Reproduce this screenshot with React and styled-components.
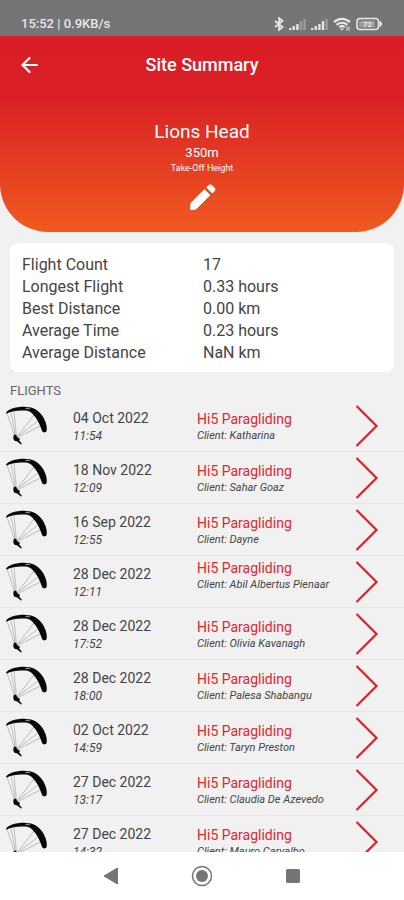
import React from "react";
import styled, { createGlobalStyle } from "styled-components";

const GlobalStyle = createGlobalStyle`
  *, *::before, *::after { box-sizing: border-box; }
  body {
    margin: 0;
    background: #f1f1f1;
    font-family: Roboto, "Liberation Sans", sans-serif;
    color: #444;
  }
  h1, h2, h3, p, dl, dd, ul { margin: 0; padding: 0; }
`;

const Screen = styled.div`
  display: flex;
  flex-direction: column;
  height: 100vh;
  overflow: hidden;
`;

const StatusBar = styled.div`
  flex: none;
  display: flex;
  align-items: flex-end;
  justify-content: space-between;
  height: 36px;
  padding: 0 21px 4px;
  background: #757575;
  color: #e6e6e6;
  font-size: 13px;
  font-weight: 500;
  line-height: 16px;
`;

const StatusIcons = styled.div`
  display: flex;
  align-items: center;
  gap: 5px;
  height: 16px;
`;

const Hero = styled.header`
  flex: none;
  height: 196px;
  border-radius: 0 0 48px 48px;
  background: linear-gradient(#d91e26 0%, #da1f26 30%, #f05a1f 100%);
  color: #fff;
`;

const TitleBar = styled.div`
  display: grid;
  grid-template-columns: 60px 1fr 60px;
  align-items: center;
  height: 58px;
`;

const IconButton = styled.button`
  display: flex;
  align-items: center;
  justify-content: center;
  padding: 0;
  border: 0;
  background: none;
  color: inherit;
  cursor: pointer;
`;

const PageTitle = styled.h1`
  font-size: 18px;
  line-height: 24px;
  font-weight: 500;
  text-align: center;
`;

const Site = styled.div`
  display: flex;
  flex-direction: column;
  align-items: center;
  padding-top: 26px;
`;

const SiteName = styled.h2`
  font-size: 19px;
  line-height: 24px;
  font-weight: 400;
`;

const SiteHeight = styled.p`
  font-size: 13px;
  line-height: 18px;
`;

const SiteCaption = styled.p`
  margin-bottom: 9px;
  font-size: 9px;
  line-height: 12px;
`;

const Content = styled.main`
  flex: 1;
  min-height: 0;
  overflow: hidden;
`;

const StatsCard = styled.dl`
  display: grid;
  grid-template-columns: 1fr 1fr;
  column-gap: 2px;
  margin: 11px 10px 10px;
  padding: 11px 12px 8px;
  border-radius: 8px;
  background: #fff;
  font-size: 16px;
  line-height: 22px;
`;

const SectionTitle = styled.h3`
  padding-left: 10px;
  color: #666;
  font-size: 13px;
  line-height: 18px;
  font-weight: 400;
`;

const FlightList = styled.ul`
  list-style: none;
`;

const FlightRow = styled.li`
  display: grid;
  grid-template-columns: 73px 124px 1fr 74px;
  align-items: center;
  height: 52px;
  border-bottom: 1px solid #e8e8e8;
`;

const FlightDate = styled.p`
  font-size: 14px;
  line-height: 20px;
`;

const FlightTime = styled.p`
  font-size: 12px;
  line-height: 16px;
  font-style: italic;
`;

const Operator = styled.p`
  color: #e0262e;
  font-size: 14px;
  line-height: 20px;
`;

const Client = styled.p`
  min-height: ${(p) => (p.$lines || 1) * 14}px;
  font-size: 11px;
  line-height: 14px;
  font-style: italic;
  white-space: nowrap;
`;

const GliderSvg = styled.svg`
  margin-left: 5px;
`;

const NavBar = styled.nav`
  flex: none;
  display: flex;
  align-items: center;
  justify-content: center;
  gap: 68px;
  height: 48px;
  background: #fff;
  color: #757575;
`;

const NavButton = styled(IconButton)`
  width: 23px;
  height: 24px;
`;

const stats = [
  ["Flight Count", "17"],
  ["Longest Flight", "0.33 hours"],
  ["Best Distance", "0.00 km"],
  ["Average Time", "0.23 hours"],
  ["Average Distance", "NaN km"],
];

const flights = [
  { date: "04 Oct 2022", time: "11:54", client: "Katharina" },
  { date: "18 Nov 2022", time: "12:09", client: "Sahar Goaz" },
  { date: "16 Sep 2022", time: "12:55", client: "Dayne" },
  { date: "28 Dec 2022", time: "12:11", client: "Abil Albertus Pienaar", lines: 2 },
  { date: "28 Dec 2022", time: "17:52", client: "Olivia Kavanagh" },
  { date: "28 Dec 2022", time: "18:00", client: "Palesa Shabangu" },
  { date: "02 Oct 2022", time: "14:59", client: "Taryn Preston" },
  { date: "27 Dec 2022", time: "13:17", client: "Claudia De Azevedo" },
  { date: "27 Dec 2022", time: "14:32", client: "Mauro Carvalho" },
];

function Bluetooth() {
  return (
    <svg width="10" height="14" viewBox="0 0 10 14" fill="none" stroke="currentColor" strokeWidth="1.8">
      <path d="M1 4l7.500 6L5 13V1l3.500 3L1 10" />
    </svg>
  );
}

function Signal({ bars }) {
  return (
    <svg width="17" height="12" viewBox="0 0 17 12" fill="currentColor">
      {[2, 4, 6, 9, 11].map((h, i) => (
        <rect key={h} x={i * 3.6} y={12 - h} width="2.4" height={h} rx="0.6" opacity={i < bars ? 1 : 0.35} />
      ))}
    </svg>
  );
}

function Wifi() {
  return (
    <svg width="18" height="14" viewBox="0 0 18 14" fill="none" stroke="currentColor" strokeWidth="2.200">
      <path d="M1 5.200C5.500.8 12.500.8 17 5.200M3.600 7.900c3-2.900 7.800-2.900 10.800 0M6.200 10.300c1.600-1.500 4-1.500 5.600 0" />
      <path d="M7 11.400h4L9 13.600z" fill="currentColor" stroke="none" />
      <path d="M14 9.500v4M16 9.500v4" strokeWidth="1" />
    </svg>
  );
}

function Battery() {
  return (
    <svg width="27" height="14" viewBox="0 0 27 14" fill="none" stroke="currentColor">
      <rect x="1" y="1.500" width="21.500" height="11" rx="3" strokeWidth="1.600" />
      <rect x="3" y="3.500" width="16" height="7" rx="1" fill="currentColor" stroke="none" opacity="0.35" />
      <path d="M24 4l2 3-2 3z" fill="currentColor" />
      <text x="11.500" y="10" fontSize="8" fontWeight="700" textAnchor="middle" fill="currentColor" stroke="none">72</text>
    </svg>
  );
}

function BackArrow() {
  return (
    <svg width="18" height="18" viewBox="0 0 18 18" fill="none" stroke="currentColor" strokeWidth="2.200" strokeLinecap="round">
      <path d="M16 9H2M8.500 2L1.500 9l7 7" />
    </svg>
  );
}

function Pencil() {
  return (
    <svg width="28" height="28" viewBox="0 0 28 28" fill="currentColor" stroke="currentColor" strokeLinejoin="round">
      <path d="M2.500 26.500l.5-6.500L16.500 6.500l5.500 5.500L8.500 25.500l-2 1z" />
      <path d="M18.800 4.400l1.700-1.700c1-1 2.600-1 3.600 0l2 2c1 1 1 2.500 0 3.500l-1.800 1.800z" />
    </svg>
  );
}

function Paraglider() {
  return (
    <GliderSvg width="43" height="40" viewBox="0 0 43 40">
      <path
        d="M2 7L10 31M6 6l5 26M9 5l2.500 26M33 15L12 31M35 20L12 32M29 9L12 31"
        fill="none" stroke="#a8a8a8" strokeWidth="0.700"
      />
      <path
        d="M1 7.800C.5 5 7 1.500 16 .8c5-.4 10 .1 14 2.200 5 2.700 8.500 7.500 10.500 13 1.200 3.500 1.700 7 1 9-.8 2-3.600 1.800-4.400 0C35.500 20.500 33.500 14.500 28.500 9 26 6.300 24 4.900 21 4.600 14 4.200 7 4.600 1 7.800z"
        fill="#080808"
      />
      <path d="M20.500 2.600l2.500-.5 2 1.200" fill="none" stroke="#aaa" />
      <path d="M9 28.500l2.200.5 1.300 2.500 2.500 1.200-.8 1.500 2.700 3.800-1 .5-3.600-3-3.300-1-.8-3z" fill="#080808" />
    </GliderSvg>
  );
}

function Chevron() {
  return (
    <svg width="24" height="42" viewBox="0 0 24 42" fill="none" stroke="#d9232b" strokeWidth="2.200">
      <path d="M1.500 1l20 20-20 20" />
    </svg>
  );
}

function Flight({ date, time, client, lines }) {
  return (
    <FlightRow>
      <Paraglider />
      <div>
        <FlightDate>{date}</FlightDate>
        <FlightTime>{time}</FlightTime>
      </div>
      <div>
        <Operator>Hi5 Paragliding</Operator>
        <Client $lines={lines}>Client: {client}</Client>
      </div>
      <IconButton aria-label={`Open flight of ${date}, ${time}`}>
        <Chevron />
      </IconButton>
    </FlightRow>
  );
}

export default function App() {
  return (
    <Screen>
      <GlobalStyle />
      <StatusBar>
        <span>15:52 | 0.9KB/s</span>
        <StatusIcons>
          <Bluetooth />
          <Signal bars={3} />
          <Signal bars={4} />
          <Wifi />
          <Battery />
        </StatusIcons>
      </StatusBar>
      <Hero>
        <TitleBar>
          <IconButton aria-label="Back"><BackArrow /></IconButton>
          <PageTitle>Site Summary</PageTitle>
        </TitleBar>
        <Site>
          <SiteName>Lions Head</SiteName>
          <SiteHeight>350m</SiteHeight>
          <SiteCaption>Take-Off Height</SiteCaption>
          <IconButton aria-label="Edit site"><Pencil /></IconButton>
        </Site>
      </Hero>
      <Content>
        <StatsCard>
          {stats.map(([label, value]) => (
            <React.Fragment key={label}>
              <dt>{label}</dt>
              <dd>{value}</dd>
            </React.Fragment>
          ))}
        </StatsCard>
        <SectionTitle>FLIGHTS</SectionTitle>
        <FlightList>
          {flights.map((f) => (
            <Flight key={f.date + f.time} {...f} />
          ))}
        </FlightList>
      </Content>
      <NavBar>
        <NavButton aria-label="Back">
          <svg width="16" height="18" viewBox="0 0 16 18" fill="currentColor">
            <path d="M14.500 1v16L1 9z" stroke="currentColor" strokeLinejoin="round" />
          </svg>
        </NavButton>
        <NavButton aria-label="Home">
          <svg width="22" height="22" viewBox="0 0 22 22">
            <circle cx="11" cy="11" r="9.500" fill="none" stroke="currentColor" strokeWidth="1.500" />
            <circle cx="11" cy="11" r="6" fill="currentColor" />
          </svg>
        </NavButton>
        <NavButton aria-label="Recent apps">
          <svg width="16" height="16" viewBox="0 0 16 16" fill="currentColor">
            <rect x="1" y="1" width="14" height="14" rx="1.500" />
          </svg>
        </NavButton>
      </NavBar>
    </Screen>
  );
}
